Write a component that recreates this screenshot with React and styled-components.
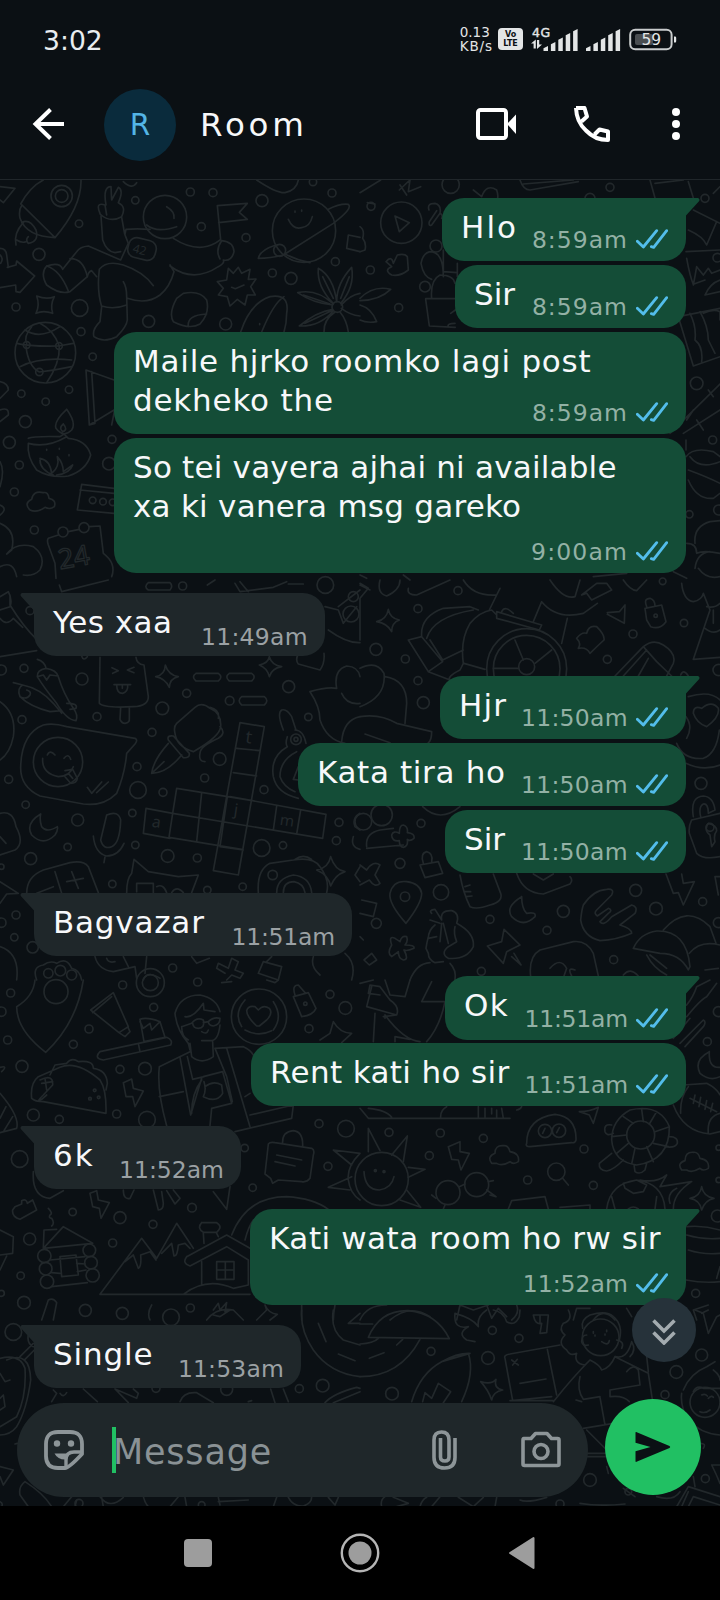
import React, { Component } from 'react'
import styled, { createGlobalStyle } from 'styled-components'

const GlobalStyle = createGlobalStyle`
* {
  box-sizing: border-box;
}

body {
  margin: 0;
  background-color: #0b1014;
  font-family: "DejaVu Sans", "Noto Sans", sans-serif;
}

svg {
  display: block;
  flex-shrink: 0;
}
`

const Page = styled.div`
display: flex;
flex-direction: column;
width: 720px;
height: 1600px;
overflow: hidden;
background-color: #0b1014;
color: #f7f8fa;
`

const StatusBar = styled.div`
display: flex;
align-items: center;
height: 78px;
padding: 0 43px 0 43px;
`

const Clock = styled.span`
font-size: 26.6px;
line-height: 30px;
color: #e9edef;
margin: 3px auto 0 0;
`

const NetSpeed = styled.div`
display: flex;
flex-direction: column;
font-size: 13.5px;
line-height: 14px;
color: #e3e5e6;
margin-right: 5px;

& > *:last-child {
letter-spacing: 0.9px;
}
`

const Badge = styled.div`
display: flex;
flex-direction: column;
align-items: center;
justify-content: center;
width: 25px;
height: 22px;
margin-right: 8px;
border-radius: 4px;
background-color: #e3e5e6;
color: #0b1014;
font-size: 8px;
font-weight: 800;
line-height: 9.5px;
`

const NavBar = styled.div`
display: flex;
align-items: center;
height: 102px;
padding: 0 40px 10px 32px;
border-bottom: 1px solid #20262a;
`

const Avatar = styled.div`
display: flex;
align-items: center;
justify-content: center;
width: 72px;
height: 72px;
margin: 2px 25px 0 40px;
border-radius: 50%;
background-color: #0a2b3c;
color: #53b5e6;
font-size: 29.5px;
line-height: 36px;
`

const Title = styled.span`
flex: 1;
font-size: 32.5px;
line-height: 40px;
letter-spacing: 3.8px;
margin-bottom: -3px;
margin-left: -1px;
`

const Actions = styled.div`
display: flex;
align-items: center;
gap: 62px;
`

const Chat = styled.div`
display: flex;
flex-direction: column;
position: relative;
height: 1326px;
overflow: hidden;
`

const Backdrop = styled.svg`
position: absolute;
top: 0;
left: 0;
`

const MessageList = styled.div`
display: flex;
flex-direction: column;
position: relative;
padding: 18px 34px 0;
`

const Bubble = styled.div`
display: flex;
justify-content: space-between;
position: relative;
align-self: ${props => props.$mine ? 'flex-end' : 'flex-start'};
width: ${props => props.$width}px;
height: ${props => props.$height || 63}px;
margin-top: ${props => props.$gap}px;
padding: 10px ${props => props.$mine ? 18 : 17}px 0 19px;
border-radius: 22px;
background-color: ${props => props.$mine ? '#144d37' : '#1f272a'};
${props => props.$tail && (props.$mine ? 'border-top-right-radius: 0;' : 'border-top-left-radius: 0;')}
`

const TailShape = styled.svg`
position: absolute;
top: 0;
${props => props.$mine ? 'right: -14px;' : 'left: -14px; transform: scaleX(-1);'}
fill: ${props => props.$mine ? '#144d37' : '#1f272a'};
`

const Lines = styled.div`
display: flex;
flex-direction: column;
width: 0;
`

const Line = styled.span`
font-size: 31px;
line-height: 39px;
letter-spacing: ${props => props.$spacing}px;
white-space: nowrap;
`

const Meta = styled.div`
display: flex;
align-items: flex-end;
align-self: flex-end;
padding-bottom: ${props => props.$mine ? 9 : 7}px;
color: ${props => props.$mine ? '#93b1a5' : '#9ba1a4'};
`

const Time = styled.span`
font-size: 23.5px;
line-height: 24px;
letter-spacing: ${props => props.$spacing}px;
white-space: nowrap;
`

const Ticks = styled.svg`
margin: 0 0 3px 8px;
`

const ScrollButton = styled.div`
display: flex;
align-items: center;
justify-content: center;
position: absolute;
right: 24px;
top: 1118px;
width: 64px;
height: 64px;
padding-top: 4px;
border-radius: 50%;
background-color: #26323a;
`

const Composer = styled.div`
display: flex;
align-items: center;
justify-content: space-between;
position: relative;
margin-top: auto;
padding: 0 19px 6px 17px;
`

const InputPill = styled.div`
display: flex;
align-items: center;
width: 571px;
height: 94px;
padding: 0 27px 0 27px;
margin-top: 1px;
border-radius: 47px;
background-color: #1f272a;
`

const Caret = styled.div`
width: 4px;
height: 46px;
margin-left: 28px;
background-color: #21c063;
`

const Placeholder = styled.span`
flex: 1;
margin-left: -3px;
padding-top: 3px;
font-size: 35px;
line-height: 44px;
letter-spacing: 0.8px;
color: #8a9295;
`

const SendButton = styled.div`
display: flex;
align-items: center;
justify-content: center;
width: 96px;
height: 96px;
margin-bottom: 5px;
border-radius: 50%;
background-color: #21c063;
`

const SystemNav = styled.div`
display: flex;
align-items: center;
justify-content: space-between;
height: 94px;
padding: 0 185px 0 184px;
background-color: #000;
`

const messages = [
  {mine: true, tail: true, gap: 0, width: 244, lines: [['Hlo', 2.1]], time: '8:59am', spacing: 1},
  {mine: true, gap: 4, width: 231, lines: [['Sir', 0]], time: '8:59am', spacing: 1},
  {mine: true, gap: 4, width: 572, height: 102, lines: [['Maile hjrko roomko lagi post', 0.76], ['dekheko the', 0.8]], time: '8:59am', spacing: 1},
  {mine: true, gap: 4, width: 572, height: 135, lines: [['So tei vayera ajhai ni available', 0.2], ['xa ki vanera msg gareko', 0.24]], time: '9:00am', spacing: 1.15},
  {tail: true, gap: 20, width: 291, lines: [['Yes xaa', 0.47]], time: '11:49am', spacing: 0.3},
  {mine: true, tail: true, gap: 20, width: 246, lines: [['Hjr', 1.2]], time: '11:50am', spacing: 0.3},
  {mine: true, gap: 4, width: 388, lines: [['Kata tira ho', 0.65]], time: '11:50am', spacing: 0.3},
  {mine: true, gap: 4, width: 241, lines: [['Sir', 0]], time: '11:50am', spacing: 0.3},
  {tail: true, gap: 20, width: 318, lines: [['Bagvazar', 0.8]], time: '11:51am', spacing: -0.2},
  {mine: true, tail: true, gap: 20, width: 241, height: 64, lines: [['Ok', 1.4]], time: '11:51am', spacing: -0.2},
  {mine: true, gap: 3, width: 435, lines: [['Rent kati ho sir', 0.35]], time: '11:51am', spacing: -0.2},
  {tail: true, gap: 20, width: 207, lines: [['6k', 2]], time: '11:52am', spacing: 0},
  {mine: true, tail: true, gap: 20, width: 436, height: 96, lines: [['Kati wata room ho rw sir', 0.55]], time: '11:52am', spacing: 0.05},
  {tail: true, gap: 20, width: 267, lines: [['Single', 0.85]], time: '11:53am', spacing: 0.15}
]

// Wallpaper doodles. Every tile is drawn at 3x and holds circles as [cx, cy, r],
// line work as path strings, and small lettering as [x, y, size, angle, text].
const tiles = [
  {
    x: 0, y: 0,
    circles: [[185, 48, 32], [185, 48, 19], [237, 131, 11], [117, 223, 18], [406, 61, 11], [571, 36, 12], [639, 38, 12], [604, 140, 12], [786, 62, 18], [738, 173, 12], [912, 152, 95], [839, 211, 18], [1006, 245, 12], [817, 279, 12], [873, 295, 18], [996, 39, 12], [939, 6, 11], [48, 381, 12], [239, 384, 25], [243, 455, 12], [446, 424, 18], [677, 432, 18], [136, 518, 91], [80, 495, 10], [177, 498, 10], [118, 576, 11], [278, 530, 11], [207, 629, 11], [64, 641, 11], [137, 665, 11], [76, 725, 18], [28, 787, 18], [58, 855, 12], [336, 778, 12], [327, 851, 19], [43, 936, 12], [103, 1050, 12], [278, 961, 10], [309, 965, 10], [338, 967, 10], [1012, 381, 16], [495, 111, 65], [189, 1056, 15], [252, 1043, 15]],
    paths: [
      'M62 72Q90 20 130 0M243 0Q245 80 165 173Q80 170 60 115Q55 90 66 75L165 173',
      'M65 127Q90 115 108 150Q118 185 85 190Q75 180 85 170M70 128Q40 160 48 195M78 185Q65 190 50 180',
      'M0 20L45 25L10 68L0 60M0 205Q18 205 20 225L25 262M0 225Q12 235 2 250',
      'M22 262L48 255L50 243L104 288L60 337L48 335L47 315L0 323',
      'M300 100Q285 65 315 75L320 105M318 75Q308 20 333 20L335 60L355 22Q372 30 355 68Q380 80 365 110Q330 130 300 102M303 108L308 180Q320 215 345 218L362 215M365 112L374 162L385 190M375 162L378 148Q410 145 450 148M362 240L385 190M362 240L265 198Q240 200 230 215L188 268Q180 245 140 258Q120 280 140 315Q180 345 210 335L262 290Q265 275 275 272L290 290',
      'M140 258Q180 270 205 333M210 236Q250 235 262 290M298 268Q320 240 370 255Q430 275 460 317M298 268Q290 330 305 380L300 425Q275 450 282 470Q310 490 350 470Q380 440 382 420L380 350Q380 320 370 305M305 378Q340 390 380 375M382 355Q440 375 480 345Q510 320 522 275L510 255M510 258Q580 310 655 260Q675 250 670 240Q695 245 702 215Q700 185 665 182Q645 210 660 237M520 175Q590 220 645 190L660 180',
      'M440 135Q470 160 530 140M500 80Q525 95 522 115M662 180L652 77L742 70L718 97L742 118L656 128',
      'M930 248Q890 240 855 222M828 195Q780 210 775 235Q810 235 850 225L1000 130Q1060 85 1045 73Q1020 70 985 88M865 118Q880 150 905 143Q930 140 937 110M885 93V97M905 90V94M770 0Q830 40 855 38Q890 30 895 0M370 5Q395 30 410 8',
      'M1040 205L1045 165L1080 172M1040 205L1080 215M652 305L680 300L685 265L700 280L715 262L725 280L750 268L745 298L768 297L752 320L766 345L742 345L735 375L712 358L690 378L682 350L655 345L670 325ZM695 322L706 326L732 315',
      'M550 340Q600 330 620 360Q630 400 600 432Q570 450 520 425Q505 400 530 355ZM565 440Q560 405 620 402M722 456Q750 370 810 350Q870 340 860 400Q860 430 852 456M785 456Q820 370 852 350M779 431v3',
      'M1000 370Q950 320 955 265Q1000 290 1010 365Q1010 310 1055 262Q1065 320 1022 370M1024 375Q1050 345 1080 340M1024 385Q1050 405 1080 408M998 375Q940 370 893 338Q950 325 1000 372M998 388Q950 395 898 438Q960 440 1000 392M1005 396Q970 420 972 456M1020 396Q1040 420 1045 456M968 290L1000 355M1048 290L1022 355M910 345L990 372M915 430L995 392',
      'M110 348Q140 360 163 350Q150 375 158 400Q130 390 108 400Q120 375 110 348M50 490Q90 500 175 498L220 490M75 450Q120 480 180 440M60 560Q120 530 215 540M78 500Q85 560 118 576Q170 570 215 560M120 430Q160 450 178 498Q180 550 140 608M80 490Q70 470 95 440',
      'M258 570L342 600M258 570L268 735L285 730L275 575M268 735L342 690M335 735L345 685M0 605Q25 610 25 630L0 655M0 690Q28 680 25 705L0 725M200 688Q160 725 168 745Q190 775 215 750Q230 730 200 688M190 732Q175 745 188 755Q205 750 190 732',
      'M85 775Q100 768 180 770L192 762L205 775Q260 780 272 825Q260 870 205 888Q150 895 110 870Q80 830 85 790Q140 805 200 770M140 808v3M178 805v3M207 824v3M120 835Q150 840 155 880Q180 860 172 830Q190 850 190 875L218 855Q210 880 170 885M120 840Q120 870 160 885',
      'M342 925L245 913L232 990L342 1000M240 930L342 940M90 990Q70 970 95 958Q100 930 130 938Q145 935 147 955Q170 960 163 980Q150 990 135 982Q110 1000 90 990M0 975Q25 985 0 1005M0 845Q15 870 0 920M0 1030Q50 1050 35 1110L20 1122Q50 1085 100 1100Q140 1130 120 1170Q100 1190 70 1185M0 1160Q40 1140 50 1190',
      'M175 1065L145 1075Q140 1080 145 1095L165 1150L168 1195M205 1055L238 1048M268 1040L300 1038L310 1120M310 1120Q350 1150 335 1190'
    ],
    texts: [[396, 216, 36, 15, '42'], [180, 1168, 82, -10, '24']]
  },
  {
    x: 360, y: 0,
    circles: [[124, 128, 62], [33, 79, 12], [31, 270, 12], [116, 383, 12], [272, 14, 26], [750, 22, 12], [1035, 55, 12], [1010, 610, 19], [1058, 780, 12], [1076, 990, 15], [988, 1003, 11], [228, 198, 18], [195, 320, 16], [690, 55, 15], [1072, 233, 13]],
    paths: [
      'M105 108L148 128L118 155ZM0 38L62 0M118 30L150 0L145 35L182 20M120 15L140 45M22 68L45 72M0 140Q15 150 8 175Q20 190 15 210L0 215M207 90Q200 70 225 70Q245 75 240 100L215 135Q205 140 208 125L230 92M240 100Q250 105 245 115',
      'M78 245Q95 225 100 250L112 225Q135 220 142 230L145 270Q120 290 95 285Q70 270 95 260ZM183 250Q190 215 215 215Q250 220 250 290M183 250Q190 290 215 298M250 210V275M250 275L292 278M292 250V290M215 356Q210 300 240 285Q280 285 285 310M197 356H286M197 358L208 438L286 442M0 355Q40 315 92 328Q60 360 0 362M0 375Q35 385 50 425Q20 430 0 420M265 440Q260 430 285 430M286 390L272 400',
      'M340 30L365 50Q380 10 410 30Q415 45 413 54M480 0Q490 30 510 30L655 5M490 12L640 0M870 0L885 54M885 10L970 0M985 5L1000 54M1060 40L1080 20M1000 90L1080 130M985 150Q1030 170 1040 195L1070 125M978 215L1080 210M980 235Q990 290 1000 313L1035 300M1000 315Q1005 290 1010 260L1030 285L1045 265L1055 280L1080 270M1035 345Q1050 310 1080 300M1035 345L1080 335',
      'M955 410L1000 558M955 410L1080 385M990 400Q1010 440 1005 480Q1030 500 1025 545M1000 558L1080 530M1020 395Q1045 440 1045 480L1065 520M1030 400Q1060 385 1080 395L1080 420M930 760L1080 612M970 760L1080 690M1045 630L1060 650M1010 720L1030 750M980 720L1000 690M978 830Q1000 800 1060 815L1080 830M990 830Q1020 870 1080 845M985 870Q1040 890 1080 910M985 900Q1010 960 1060 955L1080 940M978 810V780',
      'M1005 1090Q1000 1040 1050 1025L1080 1022M980 1090Q1010 1090 1010 1120Q1030 1110 1080 1120M1005 1165Q1010 1120 1050 1115M1015 1165Q1040 1200 1080 1190M940 1175L980 1195M0 1185L20 1195M130 1185L150 1200M700 1190L800 1180'
    ],
    texts: []
  },
  {
    x: 0, y: 400,
    circles: [[548, 18, 12], [90, 92, 12], [246, 297, 18], [72, 265, 12], [560, 340, 12], [487, 385, 19], [866, 320, 18], [689, 362, 13], [925, 411, 11], [66, 419, 12], [291, 410, 12], [456, 457, 12], [659, 537, 19], [411, 560, 12], [614, 594, 12], [26, 598, 12], [174, 546, 74], [414, 630, 25], [489, 637, 12], [792, 629, 12], [77, 674, 11], [397, 699, 11], [233, 720, 18], [203, 801, 11], [406, 795, 11], [785, 804, 25], [849, 796, 11], [1017, 727, 12], [1009, 782, 12], [92, 836, 18], [503, 828, 19], [592, 834, 12], [337, 912, 11], [728, 920, 11], [818, 885, 14], [48, 1005, 12], [43, 1072, 11], [98, 1102, 17], [518, 1164, 12], [181, 1172, 16], [888, 478, 16], [888, 478, 6], [976, 15, 25], [1053, 102, 24], [1060, 50, 15], [4, 270, 15], [4, 1028, 14], [622, 930, 11], [4, 860, 8], [145, 1180, 14], [215, 1185, 15]],
    paths: [
      'M445 8H510Q520 18 510 30H445Q430 20 445 8M178 15L185 35L325 0M622 15L645 0M705 10L720 35L820 22L860 5M720 5L745 35M865 12L910 12',
      'M0 50L25 35Q38 60 30 80L0 90M30 45V75Q70 140 110 178M0 115Q20 140 40 115L68 142M0 230L110 212M975 80L1015 90L1030 130L1070 80M985 150Q1040 190 1080 188M1015 80L1080 30M895 222Q885 240 895 252L960 270Q975 250 972 220M245 228Q250 245 262 230',
      'M300 232L298 370Q310 385 400 380Q445 378 445 350L432 255Q410 252 408 232M336 263L355 272L338 280M402 262L382 270L402 278M342 314H392M350 314Q350 340 368 340Q385 335 383 314M367 316V325M362 382L360 418Q365 430 375 430Q390 428 388 415L388 382',
      'M496 255Q505 285 535 290Q510 295 508 322Q495 295 467 290Q495 285 496 255ZM778 255Q805 250 808 230Q815 255 845 260Q815 265 808 290Q803 265 778 255M588 280H655Q670 290 655 303H588Q573 290 588 280M688 280H755Q770 290 755 303H688Q673 290 688 280M725 350H793Q808 362 793 375H725Q710 362 725 350',
      'M112 238Q135 245 138 265Q170 270 175 290Q190 340 220 385Q235 405 228 422Q200 420 170 370Q130 320 112 290Q110 270 138 265M112 290L130 285L140 300L150 285L175 288M40 308L68 315Q50 325 60 350Q90 380 150 395L185 392M68 315Q120 325 160 370L185 400M60 350Q80 360 90 345Q95 335 80 330M200 370Q235 370 228 385L210 388',
      'M0 365Q50 400 40 470Q30 520 0 540M62 560Q65 460 130 435Q160 428 200 440L405 475Q415 480 405 492L380 520Q375 580 350 640Q310 680 250 672L120 648Q60 620 62 560M128 535Q125 580 175 590Q210 588 220 560M142 525Q150 508 165 525M192 535Q205 518 212 538M195 590L212 610Q230 610 232 595L218 568L195 572M205 580L218 595M262 622L275 640L305 606M290 638L325 606',
      'M530 430L585 382Q605 365 630 385Q665 400 662 440Q660 470 580 515Q530 500 525 460Q520 440 530 430M505 480Q500 465 520 468L568 520Q570 535 550 533ZM505 490Q460 540 455 580Q500 580 545 525M455 580L492 545M630 382Q660 390 655 415M660 440Q680 460 655 475Q600 500 600 520Q595 545 615 545',
      'M720 428L793 440L715 885L640 872ZM710 505L780 512M700 578L770 588M690 650L757 662M438 685L430 760L510 775M438 685L518 700M530 625L757 662M530 625L518 700L507 772M605 638L590 785M518 700L745 738L968 775M507 772L725 808M757 662L978 703L968 775M830 678L820 750M902 690L890 762M660 800L730 810M682 650L660 800',
      'M850 450Q830 400 845 390Q860 385 875 410L888 450M885 450Q910 450 918 490M862 470Q855 490 862 500Q810 530 820 590Q830 640 895 655M890 515Q840 540 840 590Q850 620 885 635M895 560L880 598L895 600M930 335Q980 320 1010 325M930 335Q960 380 960 420Q980 480 1035 490M1010 325Q1000 270 1040 258Q1075 260 1080 290M1025 340Q1040 375 1080 370M1025 485Q1030 420 1080 410',
      'M122 702Q75 730 95 765Q130 800 165 765Q175 750 172 740Q140 760 125 740Q118 720 122 702M320 705Q355 690 362 720Q360 790 335 800Q310 810 302 780ZM280 768Q285 820 320 828Q355 828 372 790M315 830L312 848M0 700Q40 690 48 740Q75 790 45 810L0 825M0 770L18 790',
      'M80 940Q80 890 130 870L210 848Q250 840 265 860L295 938M165 875L185 940M200 905L250 895M215 875L235 925M110 940L160 920M380 938Q380 895 395 880L402 838L445 875L535 890L595 885L575 938M410 935V910H460V938M470 920Q490 910 500 938M515 938Q530 915 550 938M775 938Q770 870 810 850L880 840Q940 830 960 860Q990 900 980 938M830 938Q830 895 880 885Q930 890 935 938M850 938Q850 905 882 905Q910 910 915 938M885 838Q910 820 935 838M992 830Q1005 870 1035 875Q1005 885 992 918Q985 885 950 870Q985 865 992 830M0 905L55 940L20 942L0 970M1060 770Q1050 800 1080 808M1080 700Q1055 715 1065 740L1080 750M1080 860L1065 885L1080 905',
      'M0 1100Q60 1120 50 1200M110 1200Q95 1160 130 1155Q150 1140 170 1150Q200 1130 215 1165Q240 1170 245 1200M285 1130Q295 1170 340 1175L405 1160L410 1195M370 1130L385 1160M440 1130L435 1180M430 1200Q440 1170 480 1195M575 1130L590 1150L628 1135M655 1150L685 1165L695 1135L715 1145L705 1170L730 1180L720 1195L695 1185L680 1200M655 1150L650 1165L675 1180M790 1145L775 1180L835 1200L845 1160L790 1145M800 1145L815 1130M940 1130Q930 1160 960 1185M1035 1120Q1070 1150 1055 1200M320 1135Q325 1150 345 1145'
    ],
    texts: [[734, 488, 54, 8, 't'], [454, 740, 48, 8, 'a'], [700, 704, 48, 8, 'j'], [838, 734, 46, 8, 'm']]
  },
  {
    x: 360, y: 400,
    circles: [[294, 32, 12], [174, 86, 12], [48, 208, 18], [136, 237, 12], [174, 302, 12], [190, 368, 18], [500, 266, 120], [500, 266, 100], [500, 260, 24], [972, 129, 11], [819, 162, 12], [742, 238, 12], [1023, 610, 18], [1050, 742, 12], [183, 730, 12], [243, 937, 23], [135, 950, 14], [120, 850, 15], [49, 1030, 15], [390, 1018, 12], [561, 1051, 12], [610, 994, 18], [827, 931, 18], [888, 986, 19], [1028, 965, 12], [761, 1139, 12], [364, 1174, 12], [1076, 270, 17], [887, 107, 5], [908, 4, 10], [1075, 1028, 15], [65, 705, 32], [10, 725, 25]],
    paths: [
      'M85 88Q90 115 118 120Q95 128 95 155Q82 130 50 125Q80 118 85 88ZM60 0Q50 40 80 48Q120 30 120 0M145 25Q140 45 170 45L270 0M310 0Q340 50 410 45L420 25M388 90L410 45M0 180V55L25 25L0 10M0 15L30 30',
      'M145 180L185 170L248 245L205 275ZM185 170Q180 110 250 85L330 80L355 90M200 175Q220 110 340 90M330 130Q300 180 310 250L300 270Q260 290 270 300L205 275M330 130Q360 95 395 90L410 105M210 180L248 240M248 240L310 210M312 250L375 268M410 95L545 135L538 150L410 115ZM425 95Q435 75 460 100M520 125L545 65Q590 120 670 100L712 70M605 190L622 115M570 0Q610 60 645 50L660 0M400 265H475M525 250L575 210M465 180L490 240M665 45L710 10L740 10L755 30L695 60L680 40Z',
      'M790 0Q810 30 830 32L860 0M742 98L778 95L795 75L793 130L742 103M860 80Q850 55 870 55Q885 60 885 78M855 85L905 75L918 125Q900 150 872 140L860 120ZM965 10Q970 60 1000 65Q1025 60 1030 40L1050 90L1000 238L1080 232M1040 80Q1065 85 1080 70M1035 145Q1060 165 1080 150M1060 90V130M650 175Q665 155 680 160Q685 135 710 140Q735 165 732 180Q710 200 690 220Q680 200 655 205Q665 190 650 175',
      'M765 288L850 200Q880 175 910 195Q950 220 940 250L920 288M790 288L860 210M835 288L865 235M850 200L890 245L935 288M0 265Q50 240 72 280Q80 350 0 380M75 290Q140 300 140 370L135 430M0 410Q60 400 110 430L215 455Q215 480 205 488M15 462L90 488M962 285Q970 265 985 288M985 350Q1050 330 1080 360M1000 400Q1000 375 1025 385Q1055 360 1075 385Q1080 410 1040 440Q1010 430 1000 400M978 410Q1000 440 980 475M950 490Q970 540 1030 535Q1070 520 1078 450M978 550Q1030 575 1080 555',
      'M1000 710Q990 650 1030 648Q1060 650 1065 690L1045 700Q1045 670 1030 672Q1015 680 1022 710M995 720L1080 700M995 720Q985 740 988 760L1010 820Q1030 840 1080 830M1045 730Q1070 735 1070 752Q1060 765 1065 785L1055 800L1050 765Q1030 750 1045 730M20 800Q15 760 60 750L100 745M20 805L130 795M95 765Q100 750 118 760Q118 735 130 735Q145 740 142 758Q165 760 162 775Q150 785 142 778Q145 800 130 802Q118 800 118 782Q95 785 95 765M188 680Q240 730 300 680',
      'M0 855L20 870Q40 840 60 855L45 885L60 910Q45 925 28 900L0 915M180 855L235 845L248 880L195 893ZM190 850Q180 820 200 815Q220 820 215 845M138 1030Q85 970 90 940Q100 900 140 905Q180 910 185 940Q185 970 138 1030M5 960L50 970L40 1010L0 1000M0 1070L10 1080M12 1140L35 1120L50 1140L28 1155Z',
      'M300 885Q310 940 330 980Q350 990 390 975Q430 965 422 940L400 882M315 920L330 915M315 935H332M318 950L336 948M470 880Q490 940 550 942L630 912Q640 900 630 890M520 882L550 900L580 882M485 950Q435 980 455 1010Q490 1045 525 1010Q530 995 500 1000Q485 985 485 950M918 882L940 940L955 938L970 975L1003 905L970 910L965 882M1065 890L1080 890M1065 890L1075 945',
      'M670 975Q700 930 740 928Q765 925 755 945L710 990Q700 1000 712 1008L745 985Q760 990 745 1000L720 1025Q730 1040 755 1010L815 975Q835 980 825 1000L780 1035Q815 1045 815 1060Q770 1080 720 1082Q670 1070 662 1020Q665 990 670 975M95 1095Q85 1065 105 1075L120 1085Q125 1065 140 1070Q145 1085 135 1095Q165 1095 162 1105Q140 1115 132 1110Q148 1140 130 1140Q115 1135 115 1115L95 1130Q80 1120 95 1095',
      'M215 1000Q205 990 225 988L245 1020Q240 990 275 992Q300 1000 290 1030Q345 1060 340 1100Q320 1140 265 1135Q240 1120 265 1100L290 1085Q280 1060 285 1040M240 1030L210 1020ZM205 1070Q200 1090 198 1105L205 1120Q205 1140 225 1148L250 1145M225 1035Q205 1050 205 1075L230 1070M245 1030L240 1085M250 1030L265 1090M150 1200Q170 1150 210 1148M270 1150Q290 1170 285 1200',
      'M432 1048L480 1095L440 1115L430 1150L382 1098L425 1085ZM462 1120L483 1155L455 1130M512 1190Q505 1130 540 1110L640 1085Q680 1080 700 1120L715 1188M570 1165Q600 1130 620 1165L612 1188M635 1188Q620 1160 645 1170M820 1105Q840 1060 890 1053Q980 1050 990 1160L985 1170Q960 1120 900 1120L820 1105M910 1050Q980 970 1050 1040L1068 1090M988 1120Q1020 1080 1080 1095M860 1125Q880 1165 920 1185M870 1125L920 1165M1035 1170L1075 1165M790 1185Q810 1160 835 1188'
    ],
    texts: []
  },
  {
    x: 0, y: 800,
    circles: [[32, 39, 12], [168, 35, 36], [451, 8, 42], [451, 8, 24], [368, 15, 12], [593, 6, 12], [777, 110, 83], [461, 82, 12], [267, 147, 12], [220, 193, 12], [23, 180, 12], [4, 95, 14], [990, 43, 12], [1036, 84, 19], [927, 146, 12], [916, 71, 5], [66, 259, 18], [360, 268, 12], [435, 266, 19], [350, 402, 12], [441, 419, 25], [100, 405, 18], [178, 418, 12], [957, 431, 12], [1038, 446, 25], [284, 331, 4], [270, 356, 4], [296, 352, 4], [734, 504, 11], [984, 559, 12], [59, 537, 25], [758, 623, 11], [576, 683, 13], [218, 696, 11], [360, 713, 18], [459, 733, 12], [338, 789, 12], [89, 777, 18], [62, 887, 11], [72, 968, 19], [256, 991, 18], [367, 1000, 18], [571, 984, 12], [133, 828, 20], [137, 866, 19], [141, 905, 20], [268, 811, 19], [273, 848, 19], [278, 886, 20], [4, 940, 9], [513, 1012, 25]],
    paths: [
      'M105 0Q100 50 50 80Q50 150 137 217Q230 130 250 0M272 90L340 38L385 140L357 158ZM278 98L335 50M357 158L375 170L390 155L383 140M420 118Q440 110 480 125L495 172L432 185ZM420 125L430 145L450 130L455 150L480 125M300 215L500 172Q520 180 512 195L310 240Q280 235 300 215M415 190L420 215M665 8L695 5M800 0L825 8L835 0',
      'M570 210L565 190Q530 150 525 100Q540 45 600 45Q650 55 660 95M555 110Q580 115 610 70L612 90L645 95M545 140L575 130Q590 110 610 120Q615 145 595 145Q580 145 578 130M610 128L625 125Q640 110 660 115Q660 135 640 138Q625 135 625 125M545 140Q545 170 565 180M605 155Q620 165 625 150M660 135Q655 180 635 182L605 182M570 190L575 230Q605 255 640 230L638 185M570 215L478 260Q470 330 500 437M478 350L550 335M540 232L572 405L605 295M562 230L578 298L612 290M645 205L680 290L697 365M645 205L730 200Q752 210 760 225M680 205L750 440M610 290L668 275L695 370L635 385L630 437M615 320Q640 300 665 315L668 340Q650 370 610 350Q620 330 612 305M605 300Q575 340 575 400M735 350L750 340M750 405L880 375L875 415L705 455M870 375L880 375',
      'M770 138Q740 110 740 92Q745 75 765 80L775 90Q790 72 808 85Q820 100 800 120L778 138ZM735 60Q700 100 725 140M820 65Q850 110 820 150M735 150Q775 172 815 152M880 50L925 38L948 85Q940 105 905 110ZM885 45Q875 15 895 15L915 38M960 180L990 160L1000 125Q1020 160 1055 160L1025 188',
      'M95 355Q90 310 115 290Q150 275 180 262Q230 240 300 300Q320 330 318 400L130 365Q105 365 95 355M150 285L165 255L200 250Q215 230 235 245Q280 240 280 265Q320 270 322 310L318 330M120 300Q160 280 158 315L130 345Q105 370 125 358L140 345M135 295L140 330M125 310L158 305M370 308L395 297L400 325L430 333L405 380L398 350L378 350ZM0 262Q25 255 5 275M0 340Q60 410 50 445L0 458M18 380L0 415M38 410L12 452',
      'M805 492Q810 485 825 488L935 505Q945 510 940 525L930 595Q920 608 905 605L835 600L818 610L812 595L795 582ZM848 492Q845 455 880 452Q910 455 908 500M830 525L905 540M825 545L885 558M1080 520L1000 510L1055 555M1055 590L985 622L1050 630M1080 520Q1040 560 1045 600Q1050 640 1080 660M100 575Q95 650 150 655L190 632M370 630Q370 660 390 655L402 630M460 630L475 690Q490 690 490 670L485 635M500 632L525 672L540 655L520 630M640 635L680 688L690 620M270 640L290 632L295 660L328 668L303 715L298 685L278 680Z',
      'M45 680L65 672L65 662Q80 655 82 670L98 660L110 690L60 718Q35 710 38 690ZM145 685Q160 700 150 705Q145 715 155 715Q165 730 155 738M130 805L132 750L170 748M130 805L190 740L278 790L130 805M150 840L255 830M155 878L180 880M180 830L228 825L235 885L185 890ZM155 920L262 908M230 850L255 852M0 750L40 770L38 820L0 825M0 870L20 828M232 875L258 870',
      'M300 943L425 775L470 835L530 730L580 805M300 943H750M375 845L400 825L415 865Q425 860 422 825L450 815L468 840M485 820L515 790L522 828Q532 830 535 795L555 790L570 805M560 830L680 765L750 805M560 830Q545 850 570 858L680 800L745 840M605 845V915M610 760L612 790M650 760L655 770M605 728H650Q670 740 650 757H610Q590 745 605 728M650 845H702V898H650ZM676 845V898M650 870H702M550 943Q620 890 700 925L745 915V840M695 765Q740 650 860 650Q940 655 985 688M735 780Q745 740 760 720',
      'M125 1020L145 960Q160 952 170 968L160 1020M450 1020Q440 1000 455 975M620 1020Q650 980 700 990L730 1020M640 990L655 970L660 990L680 968L675 995L690 990L660 1010L640 1005M770 1020L800 990L795 975Q805 1000 832 1003L810 1020M905 1020V975M1005 975Q1000 1000 1000 1020'
    ],
    texts: []
  },
  {
    x: 360, y: 800,
    circles: [[87, 457, 12], [241, 459, 12], [370, 475, 12], [208, 527, 12], [672, 507, 12], [503, 600, 12], [700, 616, 12], [264, 638, 36], [350, 614, 36], [589, 575, 26], [555, 453, 20], [597, 452, 20], [1042, 185, 12], [65, 597, 80], [1072, 708, 18], [1007, 940, 12], [1075, 95, 15], [46, 572, 3], [72, 575, 3], [1076, 503, 8], [1076, 600, 8], [842, 465, 42]],
    paths: [
      'M0 10L40 0M20 80L110 105Q120 80 90 60L60 20L30 15L25 40L60 45M20 80L35 20M75 105Q130 180 180 185M185 65L255 65Q240 140 200 185M40 185L45 100M105 185V170L150 178M75 0L90 45L135 50L150 0M215 5L185 65M75 115L75 105M110 105L70 110',
      'M980 75Q1000 50 1010 20L1050 0M980 110Q1020 60 1040 50L1070 10M940 175L990 115M960 190L1030 120Q1040 125 1030 140L975 200M1048 215Q1000 240 1020 280Q1050 305 1080 290M1048 215Q1045 265 1080 262M970 315L1040 310Q1070 325 1080 345M985 320Q960 350 962 400M940 375Q970 455 1050 462L1080 455M1080 400Q1040 410 1045 460M990 355L1070 395M1005 345L1000 370M1022 352L1017 380M1040 362L1035 388M1058 370L1052 395',
      'M0 385L25 415H450M25 385Q80 390 95 412M242 415Q240 390 260 380M355 380V415M375 385V415M410 390V415M425 385L430 415M395 385V402M470 390Q480 390 485 380M658 395Q690 395 715 382L700 430L688 405ZM500 490Q500 415 585 403Q650 410 648 480Q645 490 635 488L510 500Q495 500 500 490M548 460L555 445M590 458L598 443',
      'M755 480Q755 420 810 390Q900 370 928 440Q930 540 830 555Q760 545 755 480M845 388L850 425M890 395L868 432M928 440L885 455M925 500L880 490M880 545L860 500M815 552L825 505M770 520L805 490M755 470L800 465M790 410L820 430M755 435Q730 430 735 455Q740 470 760 460M928 470Q955 470 952 490Q945 505 915 500M755 520L718 550Q715 570 740 573Q760 570 790 540M822 555L825 575Q840 585 855 570L860 550',
      'M25 515L25 445L60 512M95 525L142 468L130 545M145 562L195 568L145 592M140 630L182 682L120 660M12 575Q15 630 58 630Q95 625 102 590M265 500L300 485L300 515L328 520L303 570L295 540L275 538ZM395 550Q380 530 405 520Q405 495 430 497Q445 495 450 515Q480 520 475 545Q460 555 450 545Q425 560 410 550ZM965 570Q950 550 975 542Q975 515 1000 517Q1015 515 1020 535Q1050 540 1045 565Q1030 575 1020 565Q995 580 980 570ZM215 645L228 655M298 620L315 612M385 605L400 602M380 630L408 650L390 645M255 675L250 687M608 595L625 615',
      'M445 687L455 662L555 650L565 687M600 682L690 675V687M740 687Q750 610 830 600Q910 610 915 687M790 610L830 600L860 615L850 635L820 640L795 625ZM755 650L765 687M890 650L885 687M840 600Q890 610 920 585L900 620L995 605Q940 640 940 687M930 670Q920 640 950 625M1025 620Q1030 650 1062 655Q1035 660 1025 690Q1020 660 990 655Q1020 650 1025 620M805 687Q820 675 835 687',
      'M980 740Q1030 735 1080 750M980 765Q1030 780 1080 775M978 900Q1030 910 1080 905M985 810Q1030 825 1080 820M1070 895L1080 860M0 1020Q20 975 80 975M90 1020Q150 970 210 1010M290 1020L300 975L340 990L385 975M380 975L395 1015L415 985L440 1010M470 975Q480 1000 455 1020M640 1020L650 985H690M700 1020Q730 980 765 1020M800 985L815 1010M1010 1020L1000 990L1045 975'
    ],
    texts: []
  },
  {
    x: 0, y: 1130,
    circles: [[40, 66, 25], [468, 235, 12], [680, 238, 18], [898, 236, 12], [968, 227, 19], [237, 580, 12], [605, 585, 10]],
    paths: [
      'M0 145Q60 130 75 175Q80 260 50 320L0 350M20 150Q90 120 92 210Q80 300 50 350Q30 375 0 375M60 140L100 100M75 148L103 120M0 190L15 215L30 210M0 265L10 255L15 290L0 300M85 75Q80 100 100 110M155 275L170 250L160 240M180 250Q190 265 200 248M250 237L292 275M345 237L385 278M345 237L410 265L415 250L400 237M540 275Q550 245 590 248L640 278M745 275L755 272M812 237L825 278M850 237L865 275M975 278Q1000 250 1070 232L1080 235M1000 278L1080 245',
      'M905 0Q900 60 940 120Q990 190 1080 200M1000 0Q990 60 1030 90L1080 105M1045 40H1080M1045 40L1080 10M955 40L978 95M1015 132L1065 152M45 402L52 400M0 470L40 480L10 525L0 500M0 575Q10 580 5 590M75 515Q55 530 60 555L85 590M75 515Q130 550 155 590M190 590L215 560M225 590L230 570M300 560Q330 600 370 562M305 562L310 590M430 560Q435 580 445 590M510 590L535 560M555 562L560 590M655 562L660 585M655 575L745 570M820 590L830 562M865 562Q880 590 910 588Q935 580 935 560M985 562L1005 585L1015 562'
    ],
    texts: []
  },
  {
    x: 360, y: 1130,
    circles: [[397, 61, 12], [477, 85, 12], [213, 124, 12], [384, 144, 19], [96, 251, 19], [690, 510, 19], [1025, 135, 18], [949, 186, 19], [915, 254, 12], [722, 82, 55], [1035, 277, 45], [1036, 506, 12], [600, 582, 12], [805, 545, 10]],
    paths: [
      'M25 82Q60 0 145 2Q230 10 268 86L25 82M0 102Q40 100 55 85M110 105L128 88M0 200Q120 200 180 88M28 145L72 128M155 275Q180 190 245 155Q290 130 325 130Q345 190 305 275M245 155L330 130M188 275L195 248L215 265L235 220L272 245L250 278M362 215Q395 225 408 208Q400 235 428 240Q400 245 395 270Q385 240 362 215',
      'M435 145Q430 135 450 132L600 105M435 145L458 272M450 272L580 272M562 118L590 255M480 220L558 207M455 150L475 165M458 165L472 148M455 272L575 260M285 10Q280 60 325 50Q290 70 320 90L345 95M285 10Q340 25 355 50M355 50Q350 20 380 0M400 0Q430 5 440 35Q465 50 478 20L480 0M520 15L565 15L560 68L540 70L545 40Q525 45 520 15M540 15V40M0 42H38',
      'M625 0Q640 30 610 40Q595 60 615 75Q590 100 620 120Q630 140 650 130Q640 160 675 165L690 150M668 55Q660 30 690 15Q740 0 760 20Q790 45 778 90M680 75Q665 75 665 95Q670 110 685 105M770 90Q795 95 785 115M700 65V70M740 60V65M705 75V78M735 72V75M725 95Q745 110 748 92M690 150Q720 165 725 180Q750 175 765 140Q800 150 815 95Q830 120 810 140M690 150Q640 200 580 275M765 140L865 190L878 275M660 200Q650 240 670 268L720 260M750 240L840 225L835 180Q820 160 800 185M750 240V260Q790 255 808 275M720 262L735 345M670 355L760 340M680 360L740 420M680 430L740 430M858 120L865 185M648 270L665 275',
      'M1005 0L1030 10L1045 70L1070 20L1080 15M1025 10L1045 0M965 250Q960 290 985 330Q1020 370 1080 375M970 240Q990 190 1040 170L1065 155M1000 245Q1010 225 1030 235L1080 235M1025 255Q1035 250 1042 258M1045 265Q1055 255 1060 262M1020 305Q1035 312 1050 300M1060 180Q1080 195 1080 210M1020 400Q1040 400 1030 415M1055 465Q1070 495 1080 520M1055 465H1080M985 530L1080 560M985 530L950 590M985 545L965 590M1000 560L1080 585M1000 560L985 590M890 560Q940 575 960 545M740 470L745 490M790 535L825 560M1000 500L1005 530M680 440L740 440',
      'M65 590Q60 570 75 560M100 562L145 580L110 590M180 590Q185 570 200 562M215 590L240 560M295 562L340 590L370 562M410 562L405 590M480 570Q500 580 560 562M660 580Q720 590 795 582'
    ],
    texts: []
  }
]

const Wallpaper = () => (
  <Backdrop width="720" height="1326" viewBox="0 0 720 1326" fill="none" stroke="#22282b" strokeWidth="1.7" strokeLinecap="round" strokeLinejoin="round">
    {tiles.map((tile, i) => (
      <g key={i} transform={`translate(${tile.x} ${tile.y}) scale(0.33333)`} strokeWidth="5">
        {tile.circles.map(([cx, cy, r], j) => <circle key={j} cx={cx} cy={cy} r={r}/>)}
        {tile.paths.map((d, j) => <path key={j} d={d}/>)}
        {tile.texts.map(([x, y, size, angle, text], j) => (
          <text key={j} transform={`translate(${x} ${y}) rotate(${angle})`} fontSize={size} fontFamily="Noto Sans" strokeWidth={size > 60 ? 4 : 0} fill={size > 60 ? 'none' : '#22282b'}>{text}</text>
        ))}
      </g>
    ))}
    <rect x="128" y="59" width="28" height="20" rx="8" transform="rotate(14 142 69)"/>
  </Backdrop>
)

const bars = [5, 9, 13.5, 18, 22]

const StatusIcons = () => (
  <svg width="146" height="30" viewBox="0 -2 146 30" fill="#e3e5e6">
    <text x="1" y="11" fontSize="12.5" letterSpacing="0.6" stroke="#e3e5e6" strokeWidth="0.4">4G</text>
    <path d="M2.600 22.500V17.500H0L4.800 13.500V22.500ZM6 14H8.200V18.500H11L6 23Z"/>
    {bars.map((h, i) => <path key={i} d={`M${12.5 + i * 7.4} ${25 - h + 2.2}L${17 + i * 7.4} ${25 - h}V25H${12.5 + i * 7.4}Z`}/>)}
    {bars.map((h, i) => <path key={i} d={`M${55 + i * 7.4} ${25 - h + 2.2}L${59.5 + i * 7.4} ${25 - h}V25H${55 + i * 7.4}Z`}/>)}
    <rect x="99.2" y="3.8" width="41.4" height="19.4" rx="5" fill="none" stroke="#c9cccd" strokeWidth="2"/>
    <rect x="104" y="8" width="18" height="11" rx="2" fill="#4a4e51"/>
    <text x="110.500" y="19" fontSize="15.500">59</text>
    <path d="M143 10.5H144.3Q145.2 10.5 145.2 12V15Q145.2 16.5 144.3 16.5H143Z"/>
  </svg>
)

const Tail = ({mine}) => (
  <TailShape $mine={mine} width="15" height="18" viewBox="-1 0 15 18">
    <path d="M-1 0H12Q14.4 0.8 13 3.2L0 17.4V18H-1Z"/>
  </TailShape>
)

const ReadTicks = () => (
  <Ticks width="32" height="20" viewBox="0 0 96 60" fill="none" stroke="#53bdeb" strokeWidth="8.5" strokeLinecap="round" strokeLinejoin="round">
    <path d="M4 37L22 54L62 5M46 53L53 55L92 5"/>
  </Ticks>
)

class Message extends Component {
  render() {
    const {mine, tail, gap, width, height, lines, time, spacing} = this.props

    return (
      <Bubble $mine={mine} $tail={tail} $gap={gap} $width={width} $height={height}>
        {tail && <Tail mine={mine}/>}
        <Lines>
          {lines.map(([text, letterSpacing], i) => <Line key={i} $spacing={letterSpacing}>{text}</Line>)}
        </Lines>
        <Meta $mine={mine}>
          <Time $spacing={spacing}>{time}</Time>
          {mine && <ReadTicks/>}
        </Meta>
      </Bubble>
    )
  }
}

class App extends Component {
  render() {
    return (
      <Page>
        <GlobalStyle/>
        <StatusBar>
          <Clock>3:02</Clock>
          <NetSpeed>
            <span>0.13</span>
            <span>KB/s</span>
          </NetSpeed>
          <Badge>
            <span>Vo</span>
            <span>LTE</span>
          </Badge>
          <StatusIcons/>
        </StatusBar>

        <NavBar>
          <svg width="32" height="32" viewBox="0 0 32 32" fill="none" stroke="#fff" strokeWidth="4">
            <path d="M18.5 1.5L3.5 16L18.5 30.5M3 16H32"/>
          </svg>
          <Avatar>R</Avatar>
          <Title>Room</Title>
          <Actions>
            <svg width="134" height="36" viewBox="0 0 134 36" fill="none" stroke="#fff" strokeWidth="4">
              <rect x="2" y="4" width="28" height="28" rx="2.5"/>
              <path d="M31 18L40 8.5V28Z" fill="#fff" stroke="none"/>
              <path d="M100 2H108.5L111 10.5L105.5 15.5M100 2Q100.500 16 110 24.500Q119 34 132 34V25.500L123.500 23.500L118.500 28.500" strokeLinejoin="round"/>
            </svg>
            <svg width="8" height="32" viewBox="0 0 8 32" fill="#fff">
              <circle cx="4" cy="4" r="4"/>
              <circle cx="4" cy="16" r="4"/>
              <circle cx="4" cy="28" r="4"/>
            </svg>
          </Actions>
        </NavBar>

        <Chat>
          <Wallpaper/>
          <MessageList>
            {messages.map((message, i) => <Message key={i} {...message}/>)}
          </MessageList>
          <ScrollButton>
            <svg width="24" height="26" viewBox="0 0 24 26" fill="none" stroke="#a3abaf" strokeWidth="3.6">
              <path d="M1.500 1.500L12 12L22.500 1.500M1.500 13.500L12 24L22.500 13.500"/>
            </svg>
          </ScrollButton>
          <Composer>
            <InputPill>
              <svg width="40" height="40" viewBox="0 0 40 40" fill="none" stroke="#8d9598" strokeWidth="3.8">
                <path d="M38 20V14Q38 2 26 2H14Q2 2 2 14V26Q2 38 14 38H21Q25 38 38 24Z" strokeLinejoin="round"/>
                <path d="M22 38V30Q22 22 30 22H38" strokeWidth="3.4"/>
                <path d="M10.500 23.500H24L22 29.500Q14 30 10.500 23.500Z" fill="#8d9598" stroke="none"/>
                <circle cx="13" cy="13.500" r="3.200" fill="#8d9598" stroke="none"/>
                <circle cx="27" cy="13.500" r="3.200" fill="#8d9598" stroke="none"/>
              </svg>
              <Caret/>
              <Placeholder>Message</Placeholder>
              <svg width="130" height="40" viewBox="0 0 130 40" fill="none" stroke="#8d9598" strokeWidth="3.6">
                <path d="M24 8V27.500Q24 38 13.500 38Q3 38 3 27.500V10Q3 2 10.500 2Q18 2 18 10V27Q18 31 14 31Q9.500 31 9.500 27V8"/>
                <path d="M92.500 8.500H100L104.500 3.500H116L120.500 8.500H126.500Q128 8.500 128 10V34Q128 35.500 126.500 35.500H93.500Q92 35.500 92 34V10Q92 8.500 93.500 8.500Z" strokeLinejoin="round"/>
                <circle cx="110" cy="21.500" r="7"/>
              </svg>
            </InputPill>
            <SendButton>
              <svg width="36" height="32" viewBox="0 0 36 32" fill="#0b1014">
                <path d="M1.200 1Q0.500 0.600 0.500 1.800V11.800L15.500 16L0.500 20.200V30.200Q0.500 31.200 1.500 30.800L34.500 17Q36 16 34.500 15Z"/>
              </svg>
            </SendButton>
          </Composer>
        </Chat>

        <SystemNav>
          <svg width="28" height="28" viewBox="0 0 28 28" fill="#9d9d9d">
            <rect width="28" height="28" rx="4"/>
          </svg>
          <svg width="40" height="40" viewBox="0 0 40 40" fill="#9d9d9d">
            <circle cx="20" cy="20" r="18.200" fill="none" stroke="#b5b5b5" strokeWidth="2.400"/>
            <circle cx="20" cy="20" r="11.500"/>
          </svg>
          <svg width="27" height="34" viewBox="0 0 27 34" fill="#9d9d9d" stroke="#9d9d9d" strokeWidth="2" strokeLinejoin="round">
            <path d="M25.500 2V32L2 17Z"/>
          </svg>
        </SystemNav>
      </Page>
    )
  }
}

export default App
